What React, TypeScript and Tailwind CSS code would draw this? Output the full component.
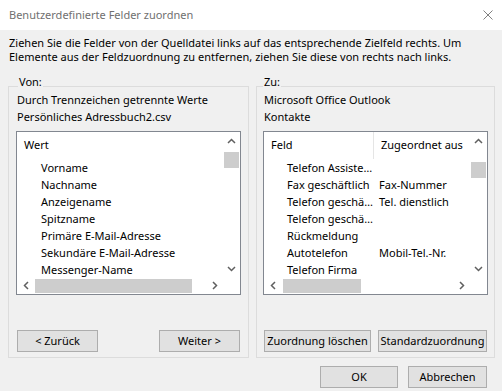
import React from "react";

const Up = () => (
  <svg width="9" height="6" viewBox="0 0 9 6"><path d="M1 5 L4.5 1.5 L8 5" fill="none" stroke="#606060" strokeWidth="1.5" /></svg>
);
const Down = () => (
  <svg width="9" height="6" viewBox="0 0 9 6"><path d="M1 1 L4.5 4.5 L8 1" fill="none" stroke="#606060" strokeWidth="1.5" /></svg>
);
const Left = () => (
  <svg width="6" height="9" viewBox="0 0 6 9"><path d="M5 1 L1.5 4.5 L5 8" fill="none" stroke="#606060" strokeWidth="1.5" /></svg>
);
const Right = () => (
  <svg width="6" height="9" viewBox="0 0 6 9"><path d="M1 1 L4.5 4.5 L1 8" fill="none" stroke="#606060" strokeWidth="1.5" /></svg>
);

function Btn({ children, className = "" }: { children: React.ReactNode; className?: string }) {
  return (
    <button className={`h-[22px] bg-[#e1e1e1] border border-[#adadad] text-black whitespace-nowrap flex items-center justify-center ${className}`}>
      {children}
    </button>
  );
}

function ListBox({
  children,
  vThumbTop,
  hThumbLeft,
  hThumbWidth,
}: {
  children: React.ReactNode;
  vThumbTop: number;
  hThumbLeft: number;
  hThumbWidth: number;
}) {
  return (
    <div className="w-[225px] h-[164px] border border-[#828790] bg-white flex flex-col">
      <div className="flex h-[145px]">
        <div className="flex-1 overflow-hidden">{children}</div>
        <div className="w-[17px] flex flex-col items-center">
          <div className="h-[17px] flex items-center justify-center"><Up /></div>
          <div className="w-[15px] h-[16px] bg-[#cdcdcd]" style={{ marginTop: vThumbTop }} />
          <div className="mt-auto h-[17px] flex items-center justify-center"><Down /></div>
        </div>
      </div>
      <div className="flex h-[17px]">
        <div className="flex-1 flex items-center">
          <div className="w-[17px] h-full flex items-center justify-center"><Left /></div>
          <div className="h-[14px] bg-[#cdcdcd]" style={{ marginLeft: hThumbLeft, width: hThumbWidth }} />
          <div className="ml-auto w-[17px] h-full flex items-center justify-center"><Right /></div>
        </div>
        <div className="w-[17px]" />
      </div>
    </div>
  );
}

const sourceFields = [
  "Vorname",
  "Nachname",
  "Anzeigename",
  "Spitzname",
  "Primäre E-Mail-Adresse",
  "Sekundäre E-Mail-Adresse",
  "Messenger-Name",
];

const targetFields: [string, string][] = [
  ["Telefon Assistent", ""],
  ["Fax geschäftlich", "Fax-Nummer"],
  ["Telefon geschäftlich", "Tel. dienstlich"],
  ["Telefon geschäftlich 2", ""],
  ["Rückmeldung", ""],
  ["Autotelefon", "Mobil-Tel.-Nr."],
  ["Telefon Firma", ""],
];

export default function App() {
  return (
    <div className="w-[502px] h-[391px] bg-[#f0f0f0] text-[11px] text-black font-['Noto_Sans',sans-serif] overflow-hidden">
      {/* Title bar */}
      <div className="h-[30px] bg-white flex items-center justify-between pl-[9px] pr-[9px]">
        <span className="text-[#707070]">Benutzerdefinierte Felder zuordnen</span>
        <svg width="10" height="10" viewBox="0 0 10 10">
          <path d="M0.5 0.5 L9.5 9.5 M9.5 0.5 L0.5 9.5" stroke="#808080" strokeWidth="1" />
        </svg>
      </div>

      <div className="px-[9px] pt-[6px] leading-[14px] whitespace-nowrap">
        <p>Ziehen Sie die Felder von der Quelldatei links auf das entsprechende Zielfeld rechts. Um</p>
        <p>Elemente aus der Feldzuordnung zu entfernen, ziehen Sie diese von rechts nach links.</p>
      </div>

      <div className="flex gap-[7px] pl-[8px] mt-[11px]">
        {/* Von */}
        <fieldset className="w-[241px] border border-[#dcdcdc] pl-[7px] pr-[7px] pb-[5px]">
          <legend className="ml-[2px] px-[1px] leading-[14px] pb-[8px]">Von:</legend>
          <div className="-mt-[6px] pl-[1px] leading-[17px]">
            <div>Durch Trennzeichen getrennte Werte</div>
            <div>Persönliches Adressbuch2.csv</div>
          </div>
          <div className="mt-[6px]">
            <ListBox vThumbTop={3} hThumbLeft={1} hThumbWidth={157}>
              <div className="h-[27px] flex items-center pl-[7px]">Wert</div>
              {sourceFields.map((f) => (
                <div key={f} className="h-[17px] leading-[17px] pl-[24px] whitespace-nowrap">
                  {f}
                </div>
              ))}
            </ListBox>
          </div>
          <div className="mt-[35px] flex justify-between px-[1px]">
            <Btn className="w-[81px]">&lt; Zurück</Btn>
            <Btn className="w-[81px]">Weiter &gt;</Btn>
          </div>
        </fieldset>

        {/* Zu */}
        <fieldset className="w-[239px] border border-[#dcdcdc] pl-[6px] pr-[6px] pb-[5px]">
          <legend className="ml-[0px] px-[1px] leading-[14px] pb-[8px]">Zu:</legend>
          <div className="-mt-[6px] pl-[1px] leading-[17px]">
            <div>Microsoft Office Outlook</div>
            <div>Kontakte</div>
          </div>
          <div className="mt-[6px]">
            <ListBox vThumbTop={13} hThumbLeft={2} hThumbWidth={78}>
              <div className="h-[27px] flex items-center">
                <div className="w-[110px] h-full flex items-center pl-[7px] border-r border-[#e5e5e5]">Feld</div>
                <div className="pl-[7px] whitespace-nowrap">Zugeordnet aus</div>
              </div>
              {targetFields.map(([a, b]) => (
                <div key={a} className="h-[17px] leading-[17px] flex whitespace-nowrap">
                  <div className="w-[110px] pl-[23px] pr-[1px] truncate">{a}</div>
                  <div className="pl-[5px]">{b}</div>
                </div>
              ))}
            </ListBox>
          </div>
          <div className="mt-[35px] flex gap-[7px] pl-[1px]">
            <Btn className="w-[107px]">Zuordnung löschen</Btn>
            <Btn className="w-[109px]">Standardzuordnung</Btn>
          </div>
        </fieldset>
      </div>

      <div className="flex justify-end gap-[10px] pr-[15px] mt-[8px]">
        <Btn className="w-[78px]">OK</Btn>
        <Btn className="w-[79px]">Abbrechen</Btn>
      </div>
    </div>
  );
}
